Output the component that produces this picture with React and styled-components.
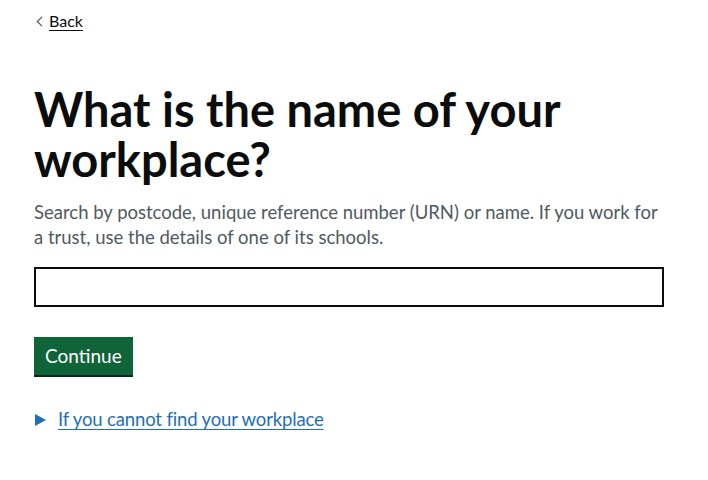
import React from "react"
import styled, { createGlobalStyle } from "styled-components"

const GlobalStyle = createGlobalStyle`
  body {
    margin: 0;
    background: #ffffff;
    font-family: Lato, "Noto Sans", "Liberation Sans", Arial, sans-serif;
    color: #0b0c0c;
  }
`

const Page = styled.div`
  padding: 0 34px;
  width: 630px;
`

const BackLink = styled.a`
  display: inline-flex;
  align-items: center;
  gap: 6px;
  margin-top: 11px;
  font-size: 16px;
  line-height: 20px;
  color: #0b0c0c;
  text-decoration: underline;
  text-underline-offset: 3px;
  cursor: pointer;

  svg {
    margin-left: 2px;
  }
`

const Main = styled.main`
  padding-top: 53px;
`

const Heading = styled.h1`
  margin: 0 0 16px;
  font-size: 47px;
  line-height: 50px;
  font-weight: 700;
`

const Hint = styled.p`
  margin: 0 0 17px;
  font-size: 18.5px;
  line-height: 25px;
  color: #505a5f;
`

const Input = styled.input`
  display: block;
  box-sizing: border-box;
  width: 630px;
  height: 40px;
  margin: 0 0 30px;
  border: 2px solid #0b0c0c;
  border-radius: 0;
  padding: 5px;
  font: inherit;
  font-size: 19px;
`

const Button = styled.button`
  display: block;
  box-sizing: border-box;
  height: 38px;
  padding: 0 11px;
  margin: 0 0 32px;
  background: #0f6538;
  color: #ffffff;
  border: 0;
  border-radius: 0;
  box-shadow: 0 2px 0 #002d18;
  font-family: inherit;
  font-size: 19px;
  line-height: 38px;
  cursor: pointer;
`

const Details = styled.details`
  font-size: 18.5px;
  line-height: 25px;
`

const Summary = styled.summary`
  display: flex;
  align-items: center;
  gap: 12px;
  list-style: none;
  color: #1d70b8;
  cursor: pointer;

  &::-webkit-details-marker {
    display: none;
  }
`

const SummaryText = styled.span`
  text-decoration: underline;
  text-underline-offset: 3px;
  letter-spacing: -0.15px;
`

const Triangle = styled.span`
  display: inline-block;
  width: 0;
  height: 0;
  margin-left: 1px;
  border-style: solid;
  border-width: 6.5px 0 6.5px 11px;
  border-color: transparent transparent transparent #1d70b8;
`

export default function App() {
  return (
    <>
      <GlobalStyle />
      <Page>
        <BackLink>
          <svg width="7" height="11" viewBox="0 0 7 11" fill="none">
            <path d="M6 0.8 L1.3 5.5 L6 10.2" stroke="#505a5f" strokeWidth="1.2" />
          </svg>
          Back
        </BackLink>
        <Main>
          <Heading>What is the name of your workplace?</Heading>
          <Hint>
            Search by postcode, unique reference number (URN) or name. If you
            work for a trust, use the details of one of its schools.
          </Hint>
          <Input type="text" aria-label="Workplace" />
          <Button>Continue</Button>
          <Details>
            <Summary>
              <Triangle />
              <SummaryText>If you cannot find your workplace</SummaryText>
            </Summary>
          </Details>
        </Main>
      </Page>
    </>
  )
}
